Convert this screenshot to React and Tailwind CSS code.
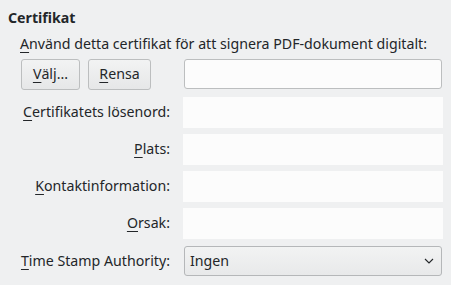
import React from "react";

function M({ c, rest }) {
  return (
    <>
      <span className="underline underline-offset-[3px] decoration-1">{c}</span>
      {rest}
    </>
  );
}

export default function App() {
  const field = "h-[31px] bg-[#fcfcfc]";
  const label = "h-[31px] flex items-center justify-end";
  return (
    <div
      className="w-[451px] h-[285px] bg-[#eff0f1] text-[#232629] text-[14.2px] leading-none px-2 pt-[10px] overflow-hidden"
      style={{ fontFamily: '"Noto Sans", "DejaVu Sans", sans-serif' }}
    >
      <div className="font-bold h-[16px] flex items-center">Certifikat</div>
      <div className="pl-3">
        <div className="mt-[10px] h-[17px] flex items-center">
          <M c="A" rest="nvänd detta certifikat för att signera PDF-dokument digitalt:" />
        </div>
        <div className="mt-[6px] grid grid-cols-[150px_260px] gap-x-[13px] gap-y-[6px]">
          <div className="flex items-center gap-2 h-[31px] mb-px pl-px">
            <button className="h-[31px] w-[59px] rounded-[3px] border border-[#bcbebf] bg-gradient-to-b from-[#f2f3f3] to-[#e6e7e8] flex items-center justify-center">
              <M c="V" rest="älj..." />
            </button>
            <button className="h-[31px] w-[63px] rounded-[3px] border border-[#bcbebf] bg-gradient-to-b from-[#f2f3f3] to-[#e6e7e8] flex items-center justify-center">
              <M c="R" rest="ensa" />
            </button>
          </div>
          <div className="px-px mb-px">
            <div className="h-[30px] bg-[#fcfcfc] border border-[#bcbebf] rounded-[3px]" />
          </div>

          <div className={label}>
            <M c="C" rest="ertifikatets lösenord:" />
          </div>
          <div className={field} />

          <div className={label}>
            <M c="P" rest="lats:" />
          </div>
          <div className={field} />

          <div className={label}>
            <M c="K" rest="ontaktinformation:" />
          </div>
          <div className={field} />

          <div className={label}>
            <M c="O" rest="rsak:" />
          </div>
          <div className={field} />

          <div className={label + " mt-px"}>
            <M c="T" rest="ime Stamp Authority:" />
          </div>
          <div className="px-px mt-px">
            <div className="h-[30px] rounded-[3px] border border-[#b5b7b9] bg-gradient-to-b from-[#f2f3f3] to-[#e8e9ea] flex items-center justify-between pl-[5px] pr-[7px]">
              <span>Ingen</span>
              <svg width="10" height="6" viewBox="0 0 10 6" fill="none">
                <path d="M1 1 L5 5 L9 1" stroke="#232629" strokeWidth="1.1" />
              </svg>
            </div>
          </div>
        </div>
      </div>
    </div>
  );
}
